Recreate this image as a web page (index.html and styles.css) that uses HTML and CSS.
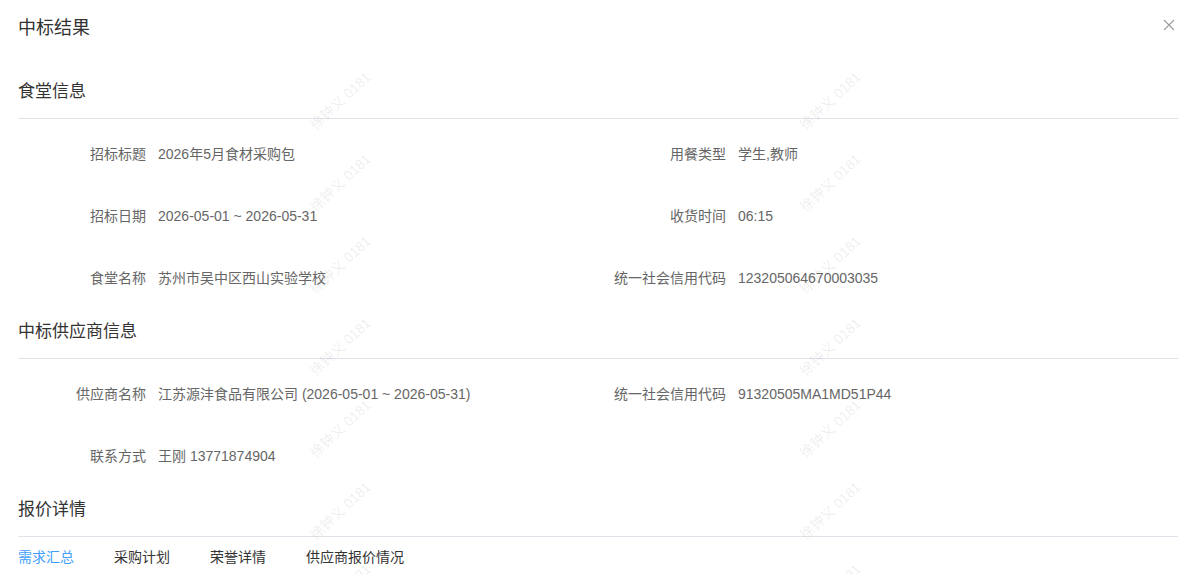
FILE: index.html
```html
<!DOCTYPE html>
<html lang="zh-CN">
<head>
<meta charset="utf-8">
<title>中标结果</title>
<link rel="stylesheet" href="styles.css">
</head>
<body>
<div class="modal">
  <div class="modal-header">
    <div class="modal-title">中标结果</div>
    <button class="close" aria-label="关闭">
      <svg width="12" height="12" viewBox="0 0 12 12"><path d="M1 1 L11 11 M11 1 L1 11" stroke="#9a9aa0" stroke-width="1.1" fill="none"/></svg>
    </button>
  </div>
  <div class="modal-body">
    <section class="section first">
      <h2 class="section-title">食堂信息</h2>
      <div class="fields">
        <div class="field"><span class="label">招标标题</span><span class="value">2026年5月食材采购包</span></div>
        <div class="field"><span class="label">用餐类型</span><span class="value">学生,教师</span></div>
        <div class="field"><span class="label">招标日期</span><span class="value">2026-05-01 ~ 2026-05-31</span></div>
        <div class="field"><span class="label">收货时间</span><span class="value">06:15</span></div>
        <div class="field"><span class="label">食堂名称</span><span class="value">苏州市吴中区西山实验学校</span></div>
        <div class="field"><span class="label">统一社会信用代码</span><span class="value">123205064670003035</span></div>
      </div>
    </section>
    <section class="section">
      <h2 class="section-title">中标供应商信息</h2>
      <div class="fields">
        <div class="field"><span class="label">供应商名称</span><span class="value">江苏源沣食品有限公司 (2026-05-01 ~ 2026-05-31)</span></div>
        <div class="field"><span class="label">统一社会信用代码</span><span class="value">91320505MA1MD51P44</span></div>
        <div class="field"><span class="label">联系方式</span><span class="value">王刚 13771874904</span></div>
      </div>
    </section>
    <section class="section">
      <h2 class="section-title">报价详情</h2>
      <div class="tabs">
        <span class="tab active">需求汇总</span>
        <span class="tab">采购计划</span>
        <span class="tab">荣誉详情</span>
        <span class="tab">供应商报价情况</span>
      </div>
    </section>
  </div>
  <div class="watermarks" aria-hidden="true">
    <span class="wm"><i>徐钟义 0181</i></span><span class="wm"><i>徐钟义 0181</i></span>
    <span class="wm"><i>徐钟义 0181</i></span><span class="wm"><i>徐钟义 0181</i></span>
    <span class="wm"><i>徐钟义 0181</i></span><span class="wm"><i>徐钟义 0181</i></span>
    <span class="wm"><i>徐钟义 0181</i></span><span class="wm"><i>徐钟义 0181</i></span>
    <span class="wm"><i>徐钟义 0181</i></span><span class="wm"><i>徐钟义 0181</i></span>
    <span class="wm"><i>徐钟义 0181</i></span><span class="wm"><i>徐钟义 0181</i></span>
    <span class="wm"><i>徐钟义 0181</i></span><span class="wm"><i>徐钟义 0181</i></span>
  </div>
</div>
</body>
</html>
```

FILE: styles.css
```css
* { box-sizing: border-box; }
html, body { margin: 0; padding: 0; background: #fff; }
body {
  font-family: "Liberation Sans", "Noto Sans CJK SC", sans-serif;
  color: #666;
  width: 1194px;
  height: 574px;
  overflow: hidden;
}
.modal { position: relative; width: 1194px; height: 574px; overflow: hidden; }
.modal-header {
  display: flex;
  align-items: center;
  justify-content: space-between;
  height: 56px;
  padding: 16px 16px 16px 18px;
}
.modal-title { font-size: 18px; line-height: 24px; color: #333; }
.close {
  border: 0; background: none; padding: 0; margin: 0 3px 6px 0;
  width: 12px; height: 12px; display: flex; cursor: pointer;
}
.modal-body { padding: 0 16px 0 18px; }
.section { margin-top: 11px; }
.section.first { margin-top: 24px; }
.section-title {
  margin: 0;
  font-weight: normal;
  font-size: 17px;
  line-height: 24px;
  color: #333;
  padding-bottom: 14px;
  border-bottom: 1px solid #e2e2ea;
}
.fields {
  display: grid;
  grid-template-columns: 580px 580px;
  padding-top: 4px;
}
.field {
  display: flex;
  align-items: center;
  height: 62px;
  font-size: 14px;
  line-height: 20px;
}
.label { width: 128px; text-align: right; color: #666; flex: none; }
.value { margin-left: 12px; color: #666; white-space: nowrap; }
.tabs {
  display: flex;
  gap: 40px;
  margin-top: 10px;
  font-size: 14px;
  line-height: 20px;
}
.tab { color: #333; }
.tab.active { color: #409eff; }
.watermarks {
  position: absolute;
  inset: 0;
  pointer-events: none;
  display: grid;
  grid-template-columns: 490px 490px;
  grid-auto-rows: 82px;
  padding: 59px 0 0 95px;
}
.wm { display: flex; align-items: center; justify-content: center; }
.wm i {
  font-style: normal;
  font-size: 14px;
  color: rgba(0, 0, 0, 0.085);
  white-space: nowrap;
  transform: rotate(-43deg);
}
```
